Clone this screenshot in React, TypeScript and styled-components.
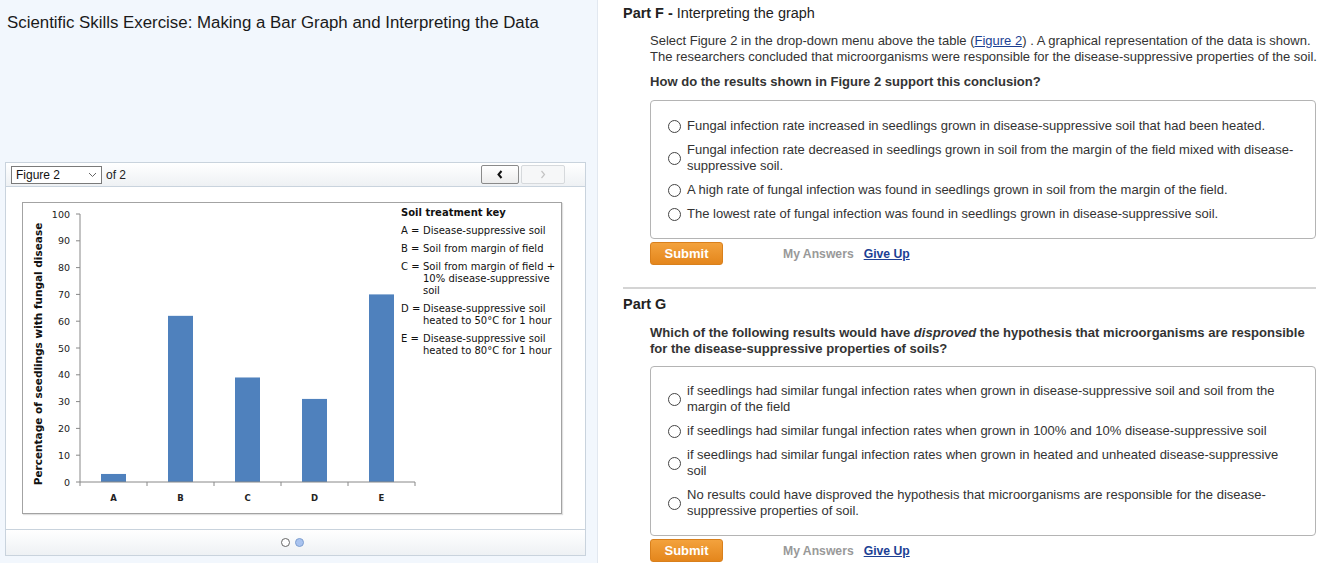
import React from 'react'
import styled, {createGlobalStyle} from 'styled-components'

const Global = createGlobalStyle`
  html, body {
    margin: 0;
    padding: 0;
    background: #fff;
    overflow: hidden;
  }
  body {
    font-family: "Liberation Sans", Arial, sans-serif;
    color: #222;
  }
`

const Page = styled.div`
  display: flex;
  width: 1323px;
  height: 563px;
`

const LeftPane = styled.aside`
  width: 598px;
  flex: none;
  background: #f2f7fd;
  border-right: 1px solid #e2e8f0;
  box-sizing: border-box;
  padding: 13px 13px 0 5px;
`

const ExerciseTitle = styled.h1`
  margin: 0 0 0 2px;
  font-size: 16.85px;
  font-weight: normal;
  color: #1a1a1a;
  line-height: 20px;
`

const FigurePanel = styled.section`
  margin-top: 129px;
  width: 579px;
  border: 1px solid #c9d3dd;
  background: #fff;
`

const Toolbar = styled.div`
  display: flex;
  align-items: center;
  height: 23px;
  padding: 0 20px 0 5px;
  background: linear-gradient(#ffffff, #eef1f4);
  border-bottom: 1px solid #c9d3dd;
  font-size: 12px;
`

const FigureSelect = styled.div`
  display: flex;
  align-items: center;
  justify-content: space-between;
  width: 91px;
  height: 18px;
  border: 1px solid #7a7a7a;
  background: #fff;
  padding: 0 4px 0 4px;
  box-sizing: border-box;
  font-size: 12px;
  color: #111;
`

const OfLabel = styled.span`
  margin-left: 4px;
  color: #222;
`

const NavGroup = styled.div`
  margin-left: auto;
  display: flex;
  gap: 2px;
`

const NavButton = styled.button<{disabled?: boolean}>`
  width: ${p => (p.disabled ? 44 : 38)}px;
  height: 19px;
  padding: 0;
  display: flex;
  align-items: center;
  justify-content: center;
  border: 1px solid ${p => (p.disabled ? '#d6d9dc' : '#8a8a8a')};
  border-radius: 2px;
  background: ${p => (p.disabled ? '#f6f7f8' : 'linear-gradient(#ffffff, #ececec)')};
  color: ${p => (p.disabled ? '#c4c4c4' : '#111')};
`

const FigureBody = styled.div`
  height: 342px;
  padding: 15px 0 0 16px;
  box-sizing: border-box;
`

const ChartBox = styled.div`
  position: relative;
  width: 540px;
  height: 312px;
  border: 1px solid #a3a3a3;
  box-shadow: 1px 1px 1px rgba(0, 0, 0, 0.12);
  box-sizing: border-box;
  background: #fff;
`

const Legend = styled.div`
  position: absolute;
  left: 378px;
  top: 4px;
  font-family: "DejaVu Sans", Verdana, sans-serif;
  font-size: 10px;
  color: #111;
`

const LegendTitle = styled.div`
  font-weight: bold;
  line-height: 12px;
  margin-bottom: 6px;
`

const LegendItem = styled.div`
  display: flex;
  line-height: 12px;
  margin-bottom: 6px;
`

const LegendKey = styled.span`
  flex: none;
  width: 22px;
  white-space: nowrap;
`

const Pager = styled.div`
  display: flex;
  justify-content: center;
  align-items: center;
  gap: 5px;
  height: 25px;
  padding-right: 6px;
  border-top: 1px solid #c9d3dd;
  background: linear-gradient(#ffffff, #eef1f4);
`

const Dot = styled.span<{active?: boolean}>`
  width: 7px;
  height: 7px;
  border-radius: 50%;
  border: 1px solid ${p => (p.active ? '#7f9fd0' : '#666')};
  background: ${p => (p.active ? '#a9c3ef' : '#fff')};
`

const RightPane = styled.main`
  flex: 1;
  min-width: 0;
  padding: 5px 7px 0 25px;
  background: #fff;
`

const PartHeading = styled.h2<{gap?: number}>`
  margin: ${p => p.gap ?? 0}px 0 0;
  font-size: 14.45px;
  line-height: 16px;
  font-weight: bold;
  color: #222;

  span {
    font-weight: normal;
  }
`

const PartBody = styled.div`
  padding-left: 27px;
`

const Paragraph = styled.p`
  margin: 12px 0 0;
  font-size: 13px;
  line-height: 16px;
  color: #333;
  white-space: nowrap;

  a {
    color: #1c3f94;
  }
`

const Question = styled.p<{gap: number}>`
  margin: ${p => p.gap}px 0 0;
  font-size: 13.05px;
  line-height: 16px;
  font-weight: bold;
  color: #333;
  white-space: nowrap;
`

const ChoiceBox = styled.div<{pad: number; top: number}>`
  margin-top: ${p => p.pad}px;
  border: 1px solid #b4b4b4;
  border-radius: 4px;
  padding: ${p => p.top}px 20px 16px 17px;
  display: flex;
  flex-direction: column;
  gap: 8px;
`

const Choice = styled.label`
  display: flex;
  align-items: center;
  gap: 6px;
  font-size: 13px;
  line-height: 16px;
  color: #333;
  white-space: nowrap;
`

const Radio = styled.span`
  flex: none;
  width: 11px;
  height: 11px;
  border-radius: 50%;
  border: 1px solid #444;
  background: #fff;
`

const ActionRow = styled.div`
  display: flex;
  align-items: center;
  margin-top: 3px;
  height: 23px;
  font-size: 12.2px;
  font-weight: bold;
`

const SubmitButton = styled.button`
  width: 73px;
  height: 23px;
  border: 1px solid #d9801c;
  border-radius: 3px;
  background: linear-gradient(#f3a23d, #e4861c);
  color: #fff;
  font-family: "Liberation Sans", Arial, sans-serif;
  font-size: 13px;
  font-weight: bold;
  padding: 0;
`

const MyAnswers = styled.span`
  margin-left: 60px;
  color: #999;
`

const GiveUp = styled.a`
  margin-left: 10px;
  color: #1c3f94;
  text-decoration: underline;
`

const Divider = styled.hr`
  margin: 22px 0 0;
  border: none;
  height: 2px;
  background: #d4d4d4;
`

const barData = [
  {label: 'A', value: 3},
  {label: 'B', value: 62},
  {label: 'C', value: 39},
  {label: 'D', value: 31},
  {label: 'E', value: 70},
]

function BarChart() {
  const x0 = 57
  const y0 = 279
  const unit = 2.68
  const cat = 67
  const ticks = [0, 10, 20, 30, 40, 50, 60, 70, 80, 90, 100]
  return (
    <svg width="538" height="310" style={{display: 'block'}}>
      <text
        transform="translate(19 151) rotate(-90)"
        textAnchor="middle"
        fontFamily="DejaVu Sans, Verdana, sans-serif"
        fontWeight="bold"
        fontSize="10.5"
        fill="#111"
      >
        Percentage of seedlings with fungal disease
      </text>
      {ticks.map(t => {
        const y = y0 - t * unit
        return (
          <g key={t}>
            <line x1={x0 - 4} x2={x0} y1={y} y2={y} stroke="#888" />
            <text
              x={x0 - 10}
              y={y + 3.5}
              textAnchor="end"
              fontFamily="DejaVu Sans, Verdana, sans-serif"
              fontSize="9.5"
              fill="#222"
            >
              {t}
            </text>
          </g>
        )
      })}
      {barData.map((d, i) => {
        const cx = x0 + cat * i + cat / 2
        const h = d.value * unit
        return (
          <g key={d.label}>
            <rect x={cx - 12.5} y={y0 - h} width={25} height={h} fill="#4f81bd" />
            <text
              x={cx}
              y={298}
              textAnchor="middle"
              fontFamily="DejaVu Sans, Verdana, sans-serif"
              fontSize="8.5"
              fontWeight="bold"
              fill="#222"
            >
              {d.label}
            </text>
          </g>
        )
      })}
      <line x1={x0} x2={x0} y1={y0 - 100 * unit} y2={y0} stroke="#888" />
      <line x1={x0} x2={x0 + cat * 5} y1={y0} y2={y0} stroke="#888" />
      {[0, 1, 2, 3, 4, 5].map(i => (
        <line
          key={i}
          x1={x0 + cat * i}
          x2={x0 + cat * i}
          y1={y0}
          y2={y0 + 4}
          stroke="#888"
        />
      ))}
    </svg>
  )
}

const legend = [
  {key: 'A =', lines: ['Disease-suppressive soil']},
  {key: 'B =', lines: ['Soil from margin of field']},
  {key: 'C =', lines: ['Soil from margin of field +', '10% disease-suppressive', 'soil']},
  {key: 'D =', lines: ['Disease-suppressive soil', 'heated to 50°C for 1 hour']},
  {key: 'E =', lines: ['Disease-suppressive soil', 'heated to 80°C for 1 hour']},
]

const partF = [
  ['Fungal infection rate increased in seedlings grown in disease-suppressive soil that had been heated.'],
  [
    'Fungal infection rate decreased in seedlings grown in soil from the margin of the field mixed with disease-',
    'suppressive soil.',
  ],
  ['A high rate of fungal infection was found in seedlings grown in soil from the margin of the field.'],
  ['The lowest rate of fungal infection was found in seedlings grown in disease-suppressive soil.'],
]

const partG = [
  [
    'if seedlings had similar fungal infection rates when grown in disease-suppressive soil and soil from the',
    'margin of the field',
  ],
  ['if seedlings had similar fungal infection rates when grown in 100% and 10% disease-suppressive soil'],
  [
    'if seedlings had similar fungal infection rates when grown in heated and unheated disease-suppressive',
    'soil',
  ],
  [
    'No results could have disproved the hypothesis that microorganisms are responsible for the disease-',
    'suppressive properties of soil.',
  ],
]

function Lines({lines}: {lines: string[]}) {
  return (
    <span>
      {lines.map((l, j) => (
        <React.Fragment key={j}>
          {j > 0 && <br />}
          {l}
        </React.Fragment>
      ))}
    </span>
  )
}

function Choices({items, pad, top}: {items: string[][]; pad: number; top: number}) {
  return (
    <ChoiceBox pad={pad} top={top}>
      {items.map((lines, i) => (
        <Choice key={i}>
          <Radio />
          <Lines lines={lines} />
        </Choice>
      ))}
    </ChoiceBox>
  )
}

function Actions() {
  return (
    <ActionRow>
      <SubmitButton>Submit</SubmitButton>
      <MyAnswers>My Answers</MyAnswers>
      <GiveUp href="#">Give Up</GiveUp>
    </ActionRow>
  )
}

export default function App() {
  return (
    <>
      <Global />
      <Page>
        <LeftPane>
          <ExerciseTitle>Scientific Skills Exercise: Making a Bar Graph and Interpreting the Data</ExerciseTitle>
          <FigurePanel>
            <Toolbar>
              <FigureSelect>
                <span>Figure 2</span>
                <svg width="9" height="6" viewBox="0 0 9 6">
                  <path d="M1 1l3.5 3.5L8 1" fill="none" stroke="#666" strokeWidth="1" />
                </svg>
              </FigureSelect>
              <OfLabel>of 2</OfLabel>
              <NavGroup>
                <NavButton>
                  <svg width="8" height="9" viewBox="0 0 8 9">
                    <path d="M5.5 1L2.5 4.5l3 3.5" fill="none" stroke="#111" strokeWidth="2" />
                  </svg>
                </NavButton>
                <NavButton disabled>
                  <svg width="8" height="9" viewBox="0 0 8 9">
                    <path d="M2.5 1l3 3.5-3 3.5" fill="none" stroke="#c4c4c4" strokeWidth="1.2" />
                  </svg>
                </NavButton>
              </NavGroup>
            </Toolbar>
            <FigureBody>
              <ChartBox>
                <BarChart />
                <Legend>
                  <LegendTitle>Soil treatment key</LegendTitle>
                  {legend.map(item => (
                    <LegendItem key={item.key}>
                      <LegendKey>{item.key}</LegendKey>
                      <Lines lines={item.lines} />
                    </LegendItem>
                  ))}
                </Legend>
              </ChartBox>
            </FigureBody>
            <Pager>
              <Dot />
              <Dot active />
            </Pager>
          </FigurePanel>
        </LeftPane>
        <RightPane>
          <PartHeading>
            Part F - <span>Interpreting the graph</span>
          </PartHeading>
          <PartBody>
            <Paragraph>
              Select Figure 2 in the drop-down menu above the table (<a href="#">Figure 2</a>) . A graphical
              representation of the data is shown.
              <br />
              The researchers concluded that microorganisms were responsible for the disease-suppressive
              properties of the soil.
            </Paragraph>
            <Question gap={9}>How do the results shown in Figure 2 support this conclusion?</Question>
            <Choices items={partF} pad={10} top={17} />
            <Actions />
          </PartBody>
          <Divider />
          <PartHeading gap={7}>Part G</PartHeading>
          <PartBody>
            <Question gap={13}>
              Which of the following results would have <i>disproved</i> the hypothesis that microorganisms are
              responsible
              <br />
              for the disease-suppressive properties of soils?
            </Question>
            <Choices items={partG} pad={9} top={16} />
            <Actions />
          </PartBody>
        </RightPane>
      </Page>
    </>
  )
}
